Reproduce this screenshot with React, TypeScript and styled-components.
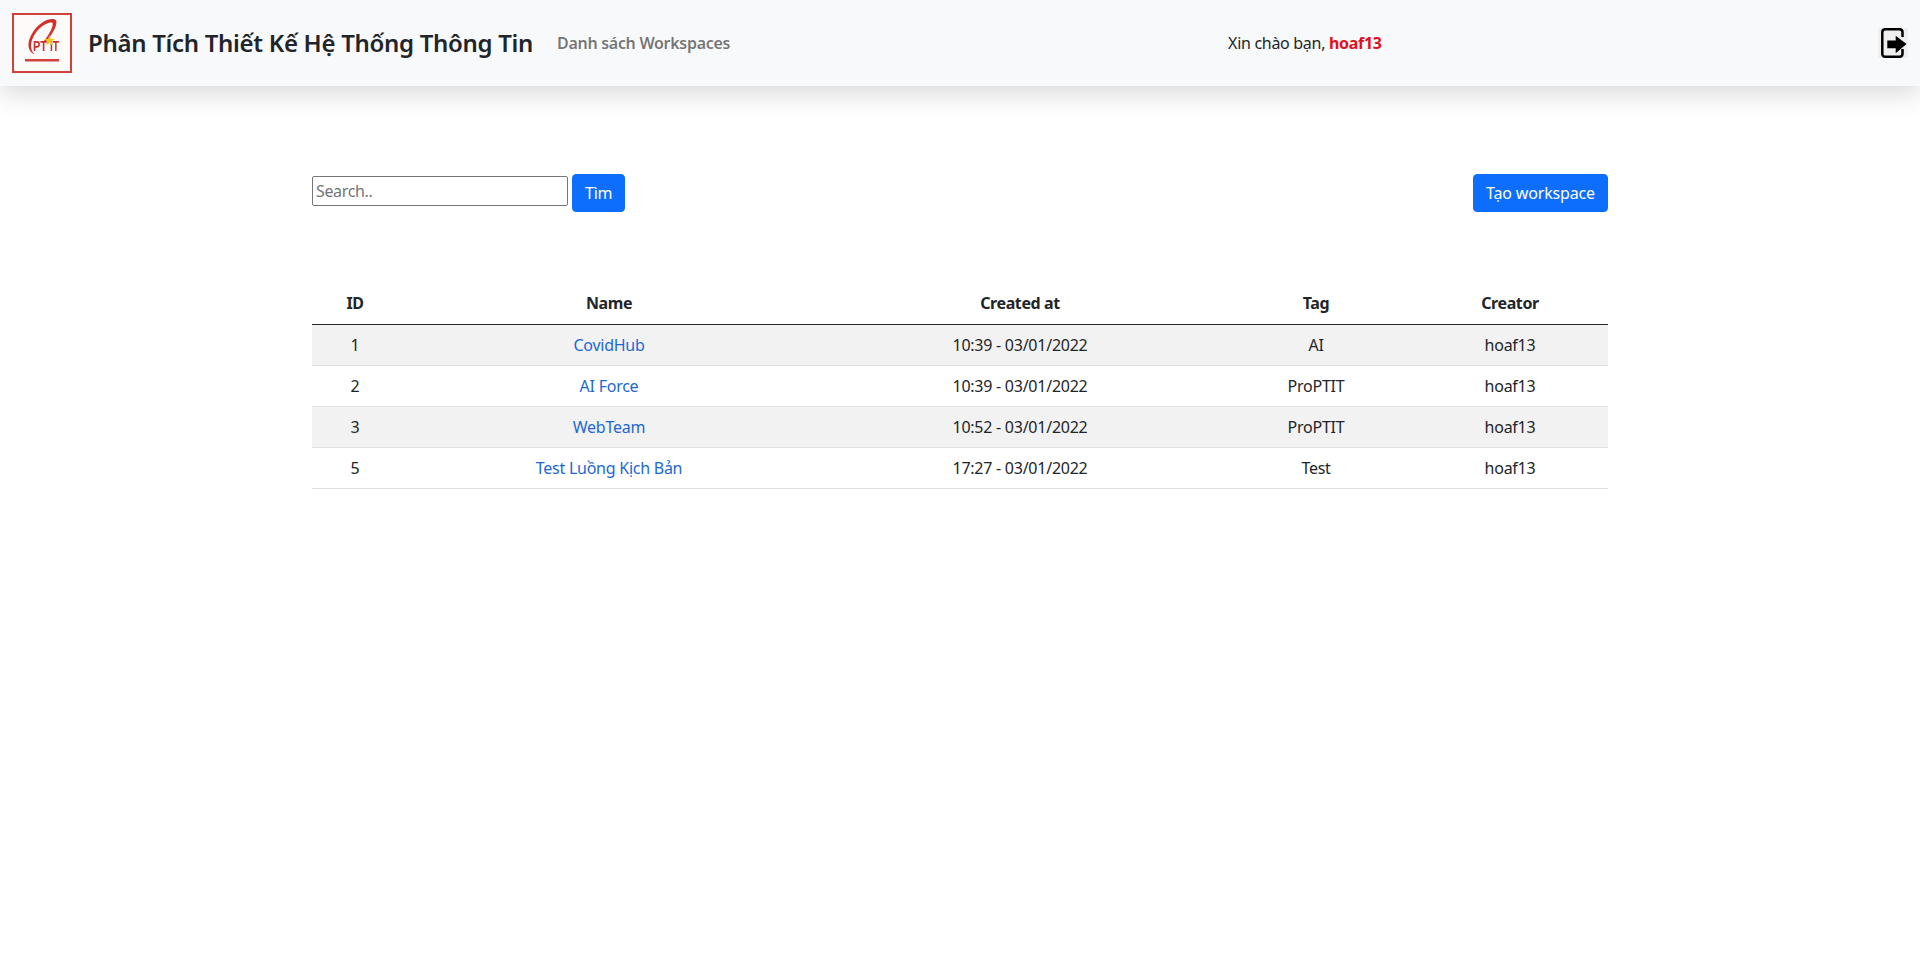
import { createGlobalStyle, styled } from "styled-components";

const GlobalStyle = createGlobalStyle`
  * { box-sizing: border-box; }
  body {
    margin: 0;
    background: #fff;
    color: #212529;
    font-family: "Noto Sans", "Open Sans", sans-serif;
    font-size: 16px;
    line-height: 24px;
  }
`;

const Navbar = styled.header`
  height: 86px;
  display: flex;
  align-items: center;
  background: #f8f9fa;
  box-shadow: 0 8px 24px rgba(0, 0, 0, 0.15);
  padding: 0 12px;
`;
const Logo = styled.div`
  width: 60px;
  height: 60px;
  flex: none;
  background: #fdfafa;
  border: 2px solid #d2403a;
  & > svg {
    display: block;
    filter: blur(0.35px);
  }
`;
const Brand = styled.div`
  margin-left: 16px;
  font-size: 24px;
  font-weight: 600;
  line-height: 36px;
  white-space: nowrap;
  letter-spacing: -0.3px;
`;
const NavLink = styled.a`
  margin-left: 24px;
  font-weight: 600;
  color: rgba(0, 0, 0, 0.55);
  white-space: nowrap;
  letter-spacing: -0.3px;
`;
const Greeting = styled.div`
  margin-left: 498px;
  white-space: nowrap;
  letter-spacing: -0.3px;
`;
const UserName = styled.b`
  color: #e3101c;
  font-weight: 700;
`;
const LogoutButton = styled.button`
  margin-left: auto;
  width: 30px;
  height: 30px;
  padding: 0;
  border: none;
  background: #efefef;
  display: flex;
`;
const Main = styled.main`
  width: 1296px;
  margin: 88px auto 0;
`;
const Toolbar = styled.div`
  display: flex;
  align-items: flex-start;
  justify-content: space-between;
  height: 38px;
`;
const SearchForm = styled.form`
  display: flex;
  align-items: flex-start;
  gap: 4px;
`;
const SearchInput = styled.input`
  width: 256px;
  height: 30px;
  margin-top: 2px;
  padding: 1px 3px;
  border: 1px solid #767676;
  border-radius: 2px;
  font: inherit;
  letter-spacing: -0.35px;
  &::placeholder { color: #757575; opacity: 1; }
`;
const Button = styled.button<{ $spacing: number }>`
  height: 38px;
  padding: 6px 12px;
  border: 1px solid #0d6efd;
  border-radius: 4px;
  background: #0d6efd;
  color: #fff;
  font: inherit;
  letter-spacing: ${(p) => p.$spacing}px;
  white-space: nowrap;
`;
const Table = styled.table`
  width: 100%;
  margin-top: 71px;
  border-collapse: collapse;
  table-layout: fixed;
  text-align: center;
`;
const HeadCell = styled.th`
  padding: 8px;
  height: 41px;
  font-weight: 700;
  border-bottom: 1px solid #212529;
  letter-spacing: -0.4px;
`;
const Row = styled.tr<{ $striped: boolean }>`
  background: ${(p) => (p.$striped ? "#f2f2f2" : "#fff")};
`;
const Cell = styled.td`
  padding: 8px;
  height: 41px;
  border-bottom: 1px solid #dee2e6;
  letter-spacing: -0.25px;
`;
const NameLink = styled.a`
  color: #1c68d4;
  text-decoration: none;
`;

const columns = [
  { title: "ID", width: 86 },
  { title: "Name", width: 422 },
  { title: "Created at", width: 400 },
  { title: "Tag", width: 192 },
  { title: "Creator", width: 196 },
];

const workspaces = [
  { id: 1, name: "CovidHub", createdAt: "10:39 - 03/01/2022", tag: "AI", creator: "hoaf13" },
  { id: 2, name: "AI Force", createdAt: "10:39 - 03/01/2022", tag: "ProPTIT", creator: "hoaf13" },
  { id: 3, name: "WebTeam", createdAt: "10:52 - 03/01/2022", tag: "ProPTIT", creator: "hoaf13" },
  { id: 5, name: "Test Luồng Kịch Bản", createdAt: "17:27 - 03/01/2022", tag: "Test", creator: "hoaf13" },
];

const PtitLogo = () => (
  <Logo>
    <svg width="56" height="56" viewBox="0 0 56 56">
      {/* crescent ring, thick on the upper right */}
      <path
        fill="#d2302a"
        d="M41 4.500C32 2 20 12 15.500 24 13 31 15 37 20.500 39.500 17 36 16 31 18 25 22 14 32 7 38 7.500 40 8 38 16 30 26L33 26C40 17 45 7 41 4.500z"
      />
      <text x="19" y="36" fontFamily="Liberation Sans" fontSize="14" fontWeight="700" fill="#c9302c" textLength="14" lengthAdjust="spacingAndGlyphs">PT</text>
      <text x="36" y="36" fontFamily="Liberation Sans" fontSize="14" fontWeight="700" fill="#c9302c" textLength="9" lengthAdjust="spacingAndGlyphs">IT</text>
      <path d="M35.500 20l1.300 4 4.200-.1-3.400 2.500 1.300 4-3.400-2.400-3.400 2.400 1.300-4-3.400-2.500 4.200.1z" fill="#f5c518" />
      <rect x="11" y="44" width="34" height="2.500" fill="#d2403a" />
    </svg>
  </Logo>
);

const LogoutIcon = () => (
  <svg width="30" height="30" viewBox="0 0 30 30">
    <path
      d="M24.500 9V4A3 3 0 0 0 21.500 1.200H7.300A3 3 0 0 0 4.300 4v22a3 3 0 0 0 3 2.800h14.200a3 3 0 0 0 3-2.800v-5"
      fill="none"
      stroke="#000"
      strokeWidth="2.500"
    />
    <path d="M9.300 12.500h8.400V7.700L28.500 16 17.700 25.300v-5H9.300z" fill="#000" />
  </svg>
);

export default function App() {
  return (
    <>
      <GlobalStyle />
      <Navbar>
        <PtitLogo />
        <Brand>Phân Tích Thiết Kế Hệ Thống Thông Tin</Brand>
        <NavLink>Danh sách Workspaces</NavLink>
        <Greeting>
          Xin chào bạn, <UserName>hoaf13</UserName>
        </Greeting>
        <LogoutButton>
          <LogoutIcon />
        </LogoutButton>
      </Navbar>
      <Main>
        <Toolbar>
          <SearchForm>
            <SearchInput placeholder="Search.." />
            <Button type="button" $spacing={-0.25}>Tìm</Button>
          </SearchForm>
          <Button type="button" $spacing={-0.15}>Tạo workspace</Button>
        </Toolbar>
        <Table>
          <colgroup>
            {columns.map((c) => (
              <col key={c.title} width={c.width} />
            ))}
          </colgroup>
          <thead>
            <tr>
              {columns.map((c) => (
                <HeadCell key={c.title}>{c.title}</HeadCell>
              ))}
            </tr>
          </thead>
          <tbody>
            {workspaces.map((w, i) => (
              <Row key={w.id} $striped={i % 2 === 0}>
                <Cell>{w.id}</Cell>
                <Cell>
                  <NameLink href="#">{w.name}</NameLink>
                </Cell>
                <Cell>{w.createdAt}</Cell>
                <Cell>{w.tag}</Cell>
                <Cell>{w.creator}</Cell>
              </Row>
            ))}
          </tbody>
        </Table>
      </Main>
    </>
  );
}
